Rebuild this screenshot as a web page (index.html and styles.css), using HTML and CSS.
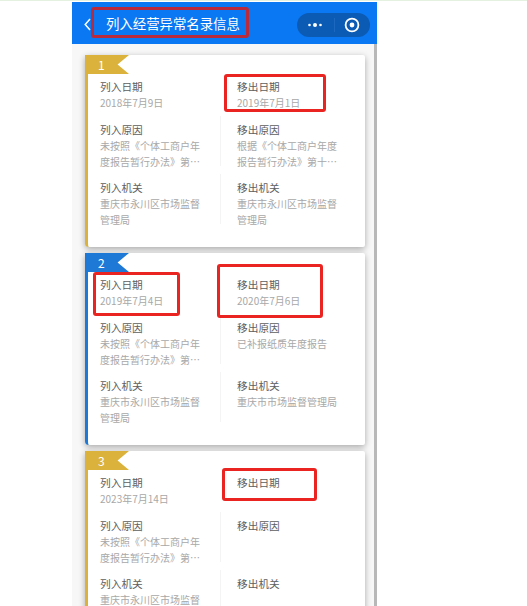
FILE: index.html
```html
<!DOCTYPE html>
<html lang="zh">
<head>
<meta charset="utf-8">
<title>列入经营异常名录信息</title>
<link rel="stylesheet" href="styles.css">
</head>
<body>
<div class="phone">
  <header class="nav">
    <svg class="back" width="7" height="13" viewBox="0 0 7 13"><path d="M6 1 L1.2 6.5 L6 12" fill="none" stroke="#fff" stroke-width="1.5"/></svg>
    <div class="title">列入经营异常名录信息</div>
    <div class="capsule">
      <svg class="dots" width="16" height="6" viewBox="0 0 16 6"><circle cx="2.5" cy="3" r="1.3" fill="#fff"/><circle cx="8" cy="3" r="2" fill="#fff"/><circle cx="13.5" cy="3" r="1.3" fill="#fff"/></svg>
      <span class="sep"></span>
      <svg class="target" width="16" height="16" viewBox="0 0 16 16"><circle cx="8" cy="8" r="6.4" fill="none" stroke="#fff" stroke-width="1.8"/><circle cx="8" cy="8" r="2.4" fill="#fff"/></svg>
    </div>
  </header>
  <main class="list">
    <section class="card gold">
      <div class="ribbon">1</div>
      <div class="row date">
        <div class="cell"><div class="label">列入日期</div><div class="value">2018年7月9日</div></div>
        <div class="cell"><div class="label">移出日期</div><div class="value">2019年7月1日</div></div>
      </div>
      <div class="row">
        <div class="cell"><div class="label">列入原因</div><div class="value">未按照《个体工商户年度报告暂行办法》第…</div></div>
        <div class="cell"><div class="label">移出原因</div><div class="value">根据《个体工商户年度报告暂行办法》第十…</div></div>
      </div>
      <div class="row">
        <div class="cell"><div class="label">列入机关</div><div class="value">重庆市永川区市场监督管理局</div></div>
        <div class="cell"><div class="label">移出机关</div><div class="value">重庆市永川区市场监督管理局</div></div>
      </div>
    </section>
    <section class="card blue">
      <div class="ribbon">2</div>
      <div class="row date">
        <div class="cell"><div class="label">列入日期</div><div class="value">2019年7月4日</div></div>
        <div class="cell"><div class="label">移出日期</div><div class="value">2020年7月6日</div></div>
      </div>
      <div class="row">
        <div class="cell"><div class="label">列入原因</div><div class="value">未按照《个体工商户年度报告暂行办法》第…</div></div>
        <div class="cell"><div class="label">移出原因</div><div class="value">已补报纸质年度报告</div></div>
      </div>
      <div class="row">
        <div class="cell"><div class="label">列入机关</div><div class="value">重庆市永川区市场监督管理局</div></div>
        <div class="cell"><div class="label">移出机关</div><div class="value">重庆市市场监督管理局</div></div>
      </div>
    </section>
    <section class="card gold">
      <div class="ribbon">3</div>
      <div class="row date">
        <div class="cell"><div class="label">列入日期</div><div class="value">2023年7月14日</div></div>
        <div class="cell"><div class="label">移出日期</div></div>
      </div>
      <div class="row">
        <div class="cell"><div class="label">列入原因</div><div class="value">未按照《个体工商户年度报告暂行办法》第…</div></div>
        <div class="cell"><div class="label">移出原因</div></div>
      </div>
      <div class="row">
        <div class="cell"><div class="label">列入机关</div><div class="value">重庆市永川区市场监督管理局</div></div>
        <div class="cell"><div class="label">移出机关</div></div>
      </div>
    </section>
  </main>
  <div class="scrollbar"></div>
</div>
<div class="mark mark-title"></div>
<div class="mark mark-a"></div>
<div class="mark mark-b"></div>
<div class="mark mark-c"></div>
<div class="mark mark-d"></div>
</body>
</html>
```
FILE: styles.css
```css
html, body {
  margin: 0;
  height: 606px;
  overflow: hidden;
  background: #fff;
}
body {
  position: relative;
  font-family: "Noto Sans CJK SC", "Noto Sans", sans-serif;
  border-top: 1px solid #e4f0e0;
  box-sizing: border-box;
}
.phone {
  position: relative;
  width: 305px;
  height: 605px;
  margin: 1px 0 0 72px;
  background: #f7f7f7;
  overflow: hidden;
}
.nav {
  height: 42px;
  background: #0a78f2;
  display: flex;
  align-items: center;
  padding: 0 7px 0 12px;
}
.back { flex: none; margin-top: 3px; }
.title {
  margin: 0 0 1px 15px;
  flex: 1;
  font-size: 13.4px;
  font-weight: 400;
  line-height: 20px;
  white-space: nowrap;
  color: #fff;
}
.capsule {
  width: 73px;
  height: 24px;
  margin-top: 3px;
  border-radius: 12px;
  background: #0b5bb5;
  display: flex;
  flex: none;
  align-items: center;
}
.dots { margin-left: 10px; }
.sep { width: 1px; height: 14px; margin-left: 11px; background: #1a68c0; }
.target { margin-left: 9px; }
.list {
  padding: 11px 12px 0 13px;
  display: flex;
  flex-direction: column;
  gap: 6px;
}
.card {
  position: relative;
  flex: none;
  height: 192px;
  box-sizing: border-box;
  padding: 24px 0 0 12px;
  background: #fff;
  border-left: 3px solid;
  border-radius: 3px 2px 2px 4px;
  box-shadow: 0 2px 6px rgba(0, 0, 0, .32);
}
.gold { border-color: #dab23c; }
.blue { border-color: #1e78d6; }
.ribbon {
  position: absolute;
  left: -3px;
  top: 0;
  width: 44px;
  height: 19px;
  box-sizing: border-box;
  padding-left: 13px;
  font-size: 12px;
  line-height: 19px;
  color: #fff;
  clip-path: polygon(0 0, 100% 0, 74% 50%, 100% 100%, 0 100%);
}
.gold .ribbon { background: #dab23c; }
.blue .ribbon { background: #1e78d6; }
.row {
  display: grid;
  grid-template-columns: 120px 125px;
  column-gap: 17px;
  height: 58px;
}
.row.date { height: 43px; }
.cell { position: relative; }
.row:not(.date) .cell:first-child::after {
  content: "";
  position: absolute;
  right: -1px;
  top: -6px;
  height: 50px;
  border-right: 1px solid #f4f4f4;
}
.label {
  font-size: 10.7px;
  line-height: 16px;
  color: #5e5e5e;
}
.value {
  max-width: 105px;
  font-size: 10px;
  line-height: 15.5px;
  color: #a8a8a8;
}
.scrollbar {
  position: absolute;
  right: 0;
  top: 42px;
  bottom: 0;
  width: 3px;
  background: #b8b8b8;
}
.mark {
  position: absolute;
  box-sizing: border-box;
  border: 3px solid #ea2420;
  border-radius: 3px;
}
.mark-title { left: 91px; top: 6px; width: 158px; height: 31px; border-color: #b92b3c; }
.mark-a { left: 224px; top: 73px; width: 102px; height: 38px; }
.mark-b { left: 93px; top: 271px; width: 87px; height: 44px; }
.mark-c { left: 217px; top: 263px; width: 106px; height: 54px; }
.mark-d { left: 222px; top: 467px; width: 95px; height: 33px; }
```
